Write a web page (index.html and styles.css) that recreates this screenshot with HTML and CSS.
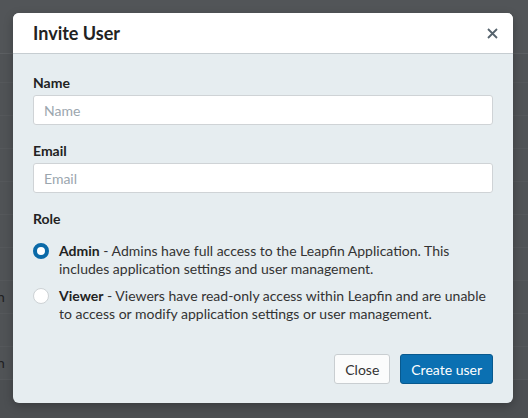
FILE: index.html
```html
<!DOCTYPE html>
<html lang="en">
<head>
  <meta charset="UTF-8">
  <title>Invite User</title>
  <link rel="stylesheet" href="styles.css">
</head>
<body>

<div class="page">
  <div class="topbar"></div>
  <div class="row short"></div>
  <div class="row"></div>
  <div class="row"></div>
  <div class="row"></div>
  <div class="row"></div>
  <div class="row"></div>
  <div class="row"></div>
  <div class="row"><span class="cell">n</span></div>
  <div class="row"></div>
  <div class="row"><span class="cell">n</span></div>
</div>

<div class="modal">
  <div class="modal-header">
    <h2>Invite User</h2>
    <svg class="close-x" width="11" height="11" viewBox="0 0 11 11">
      <path d="M1 1 L10 10 M10 1 L1 10" stroke="#56636d" stroke-width="1.8" fill="none"/>
    </svg>
  </div>

  <div class="modal-body">
    <div class="field">
      <label for="name">Name</label>
      <input type="text" id="name" placeholder="Name">
    </div>

    <div class="field">
      <label for="email">Email</label>
      <input type="text" id="email" placeholder="Email">
    </div>

    <div class="field">
      <label>Role</label>
      <div class="option">
        <span class="radio checked"></span>
        <p><strong>Admin</strong> - Admins have full access to the Leapfin Application. This includes application settings and user management.</p>
      </div>
      <div class="option">
        <span class="radio"></span>
        <p><strong>Viewer</strong> - Viewers have read-only access within Leapfin and are unable to access or modify application settings or user management.</p>
      </div>
    </div>

    <div class="modal-footer">
      <button class="btn">Close</button>
      <button class="btn btn-primary">Create user</button>
    </div>
  </div>
</div>

</body>
</html>
```

FILE: styles.css
```css
body {
  margin: 0;
  font-family: Lato, "Open Sans", sans-serif;
  background: #4c4f52;
  color: #222;
  height: 418px;
  overflow: hidden;
}
.page {
  background: #505356;
}
.topbar {
  height: 53px;
  background: #525558;
  border-bottom: 1px solid #5c5f62;
}
.row {
  height: 32px;
  border-bottom: 1px solid #55585b;
  font-size: 14px;
  line-height: 32px;
  color: #1f2022;
}
.row.short {
  height: 28px;
}
.cell {
  display: inline-block;
  margin-left: -3px;
}
.modal {
  position: absolute;
  left: 13px;
  top: 13px;
  width: 500px;
  height: 390px;
  background: #e6edf0;
  border-radius: 6px;
  overflow: hidden;
  box-shadow: 0 3px 10px rgba(0,0,0,0.25);
}
.modal-header {
  height: 40px;
  background: #fff;
  border-bottom: 1px solid #c6cdd1;
  display: flex;
  align-items: center;
  justify-content: space-between;
  padding: 0 15px 0 20px;
}
.modal-header h2 {
  margin: 0;
  font-size: 18px;
  font-weight: 700;
  color: #222;
}
.close-x {
  display: block;
}
.modal-body {
  padding: 19px 20px 20px;
}
.field {
  margin-bottom: 16px;
}
label {
  display: block;
  font-weight: bold;
  font-size: 14px;
  line-height: 20px;
  margin-bottom: 2px;
}
input[type="text"] {
  box-sizing: border-box;
  width: 100%;
  height: 30px;
  padding: 0 10px;
  border: 1px solid #cfd3d6;
  border-radius: 3px;
  background: #fff;
  font-family: inherit;
  font-size: 14px;
}
input::placeholder {
  color: #9ba6ae;
}
.option {
  display: flex;
  gap: 10px;
  margin-top: 13px;
  font-size: 14px;
  line-height: 18px;
  color: #333;
}
.option + .option {
  margin-top: 9px;
}
.option p {
  margin: 0;
}
.option strong {
  color: #222;
}
.radio {
  flex: none;
  box-sizing: border-box;
  width: 16px;
  height: 16px;
  margin-top: 1px;
  border-radius: 50%;
  background: #fff;
  border: 1px solid #cdd2d5;
}
.radio.checked {
  border: 4px solid #0b6aa8;
}
.modal-footer {
  display: flex;
  justify-content: flex-end;
  gap: 10px;
  margin-top: 31px;
}
.btn {
  height: 30px;
  padding: 0 10px;
  font-family: inherit;
  font-size: 14px;
  color: #333;
  background: #fbfcfc;
  border: 1px solid #c9ced1;
  border-radius: 3px;
}
.btn-primary {
  color: #fff;
  background: #0b70b2;
  border-color: #08598e;
}
```
